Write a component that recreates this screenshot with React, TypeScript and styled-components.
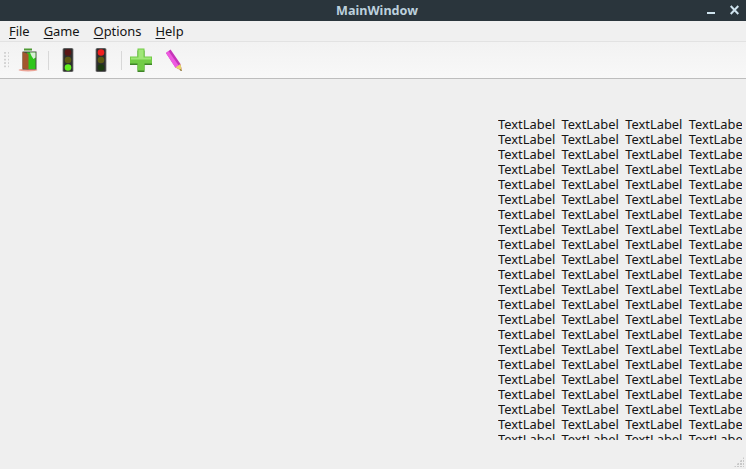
import React from 'react';
import styled, { createGlobalStyle } from 'styled-components';

const Global = createGlobalStyle`
  html, body { margin: 0; padding: 0; height: 100%; overflow: hidden; }
  #root { height: 100%; }
  * { box-sizing: border-box; }
`;

const Window = styled.div`
  width: 746px;
  height: 469px;
  display: flex;
  flex-direction: column;
  background: #efefef;
  font-family: "Noto Sans", "Open Sans", sans-serif;
  color: #141414;
  overflow: hidden;
`;

const TitleBar = styled.div`
  height: 21px;
  flex: none;
  display: flex;
  align-items: center;
  justify-content: center;
  padding-left: 8px;
  background: #2a353c;
  position: relative;
`;

const Title = styled.div`
  font-size: 12.6px;
  font-weight: 700;
  color: #bcd0dd;
`;

const WindowButtons = styled.div`
  position: absolute;
  right: 7px;
  top: 5px;
  display: flex;
  align-items: center;
  gap: 15px;
`;

const MenuBar = styled.div`
  height: 20px;
  flex: none;
  display: flex;
  align-items: center;
  padding-left: 9px;
  gap: 14px;
  background: #f0f0f0;
  font-size: 12.9px;
`;

const MenuItem = styled.div`
  u { text-underline-offset: 2px; }
`;

const ToolBar = styled.div`
  height: 38px;
  flex: none;
  display: flex;
  align-items: center;
  background: linear-gradient(#f2f2f2, #f8f8f8);
  border-top: 1px solid #e2e2e2;
  border-bottom: 1px solid #bdbdbd;
  padding-left: 4px;
`;

const Grip = styled.div`
  width: 5px;
  height: 17px;
  margin-right: 2.5px;
  background-image: radial-gradient(circle at 1px 1px, #d2d2d2 0.8px, transparent 1px);
  background-size: 4px 3.4px;
`;

const ToolButton = styled.div`
  width: 33px;
  height: 28px;
  display: flex;
  align-items: center;
  justify-content: center;
`;

const Separator = styled.div`
  width: 1px;
  height: 19px;
  margin: 0 3px;
  background: #d8d8d8;
`;

const Central = styled.div`
  flex: 1;
  min-height: 0;
  display: flex;
  padding: 38px 4px 0 498px;
`;

const LabelGrid = styled.div`
  height: 323px;
  width: 100%;
  overflow: hidden;
  display: grid;
  grid-template-columns: repeat(4, 63.6px);
  grid-auto-rows: 15px;
  align-content: start;
`;

const Label = styled.div`
  font-size: 12.9px;
  line-height: 15px;
  white-space: nowrap;
`;

const StatusBar = styled.div`
  height: 29px;
  flex: none;
  display: flex;
  justify-content: flex-end;
  align-items: flex-end;
  padding: 0 2px 2px 0;
`;

const SizeGrip = styled.div`
  width: 10px;
  height: 10px;
  background-image: radial-gradient(circle at 1px 1px, #c8c8c8 0.8px, transparent 1px);
  background-size: 3px 3px;
  clip-path: polygon(100% 0, 100% 100%, 0 100%);
`;

const DoorIcon = () => (
  <svg width="24" height="24" viewBox="0 0 24 24">
    <ellipse cx="12" cy="22" rx="9.5" ry="1.5" fill="#e88a78" opacity="0.75" />
    <rect x="8" y="0.5" width="8" height="2" fill="#4f9a35" />
    <rect x="6.5" y="3.5" width="14" height="18" fill="#46503f" />
    <rect x="11" y="4.5" width="8.5" height="16.5" fill="#2fc51a" />
    <path d="M14 4.5h5.5v5l-2 1.5-2-3z" fill="#d8efd6" />
    <path d="M6.5 4l6 2v15.5l-6-1z" fill="#a2562c" />
  </svg>
);

const Traffic = ({ on }: { on: 'green' | 'red' }) => (
  <svg width="12" height="24" viewBox="0 0 12 24">
    <rect x="0.5" y="0" width="11" height="24" rx="1.5" fill="#8c8c8c" />
    <rect x="1.3" y="0.6" width="9.4" height="22.8" rx="1.2" fill="#2e2e2e" />
    <circle cx="6" cy="4.5" r="3.3" fill={on === 'red' ? '#f02020' : '#5a1616'} />
    <circle cx="6" cy="12" r="3.3" fill="#5c5a12" />
    <circle cx="6" cy="19.5" r="3.3" fill={on === 'green' ? '#62f020' : '#1c3a10'} />
  </svg>
);

const PlusIcon = () => (
  <svg width="24" height="24" viewBox="0 0 24 24">
    <path d="M8.5 1.5h7v7.5h7.5v7h-7.5v7h-7v-7H1v-7h7.5z" fill="#3f8428" transform="translate(0 1)" />
    <path d="M8.5 0.5h7v8h7.5v7h-7.5v7h-7v-7H1v-7h7.5z" fill="#72cc46" />
    <path d="M9.5 1.5h5v8h7.5v2H2v-2h7.5z" fill="#a0e678" />
  </svg>
);

const PencilIcon = () => (
  <svg width="20" height="24" viewBox="0 0 20 24">
    <path d="M2 5l4.5-3.5 10 14.5 1.5 7-6.5-3.5z" fill="#c534b8" />
    <path d="M2 5l2.5-2 10.5 15-3.5 2z" fill="#ee5ae0" />
    <path d="M11.5 19.5l5-3.5 1.5 7z" fill="#e4d66a" />
    <path d="M16.6 21l1.4 2-2.2-.8z" fill="#6b6b2a" />
  </svg>
);

const menus: [string, string][] = [['F', 'ile'], ['G', 'ame'], ['O', 'ptions'], ['H', 'elp']];
const labels = Array.from({ length: 22 * 4 }, (_, i) => i);

export default function App() {
  return (
    <Window>
      <Global />
      <TitleBar>
        <Title>MainWindow</Title>
        <WindowButtons>
          <svg width="8" height="10" viewBox="0 0 8 10"><rect x="0" y="7" width="8" height="2" fill="#cfe3ee" /></svg>
          <svg width="9" height="10" viewBox="0 0 9 10"><path d="M.7 1l7.6 8M8.3 1L.7 9" stroke="#cfe3ee" strokeWidth="2" /></svg>
        </WindowButtons>
      </TitleBar>
      <MenuBar>
        {menus.map(([key, rest]) => (
          <MenuItem key={key}><u>{key}</u>{rest}</MenuItem>
        ))}
      </MenuBar>
      <ToolBar>
        <Grip />
        <ToolButton><DoorIcon /></ToolButton>
        <Separator />
        <ToolButton><Traffic on="green" /></ToolButton>
        <ToolButton><Traffic on="red" /></ToolButton>
        <Separator />
        <ToolButton><PlusIcon /></ToolButton>
        <ToolButton><PencilIcon /></ToolButton>
      </ToolBar>
      <Central>
        <LabelGrid>
          {labels.map((i) => <Label key={i}>TextLabel</Label>)}
        </LabelGrid>
      </Central>
      <StatusBar><SizeGrip /></StatusBar>
    </Window>
  );
}
